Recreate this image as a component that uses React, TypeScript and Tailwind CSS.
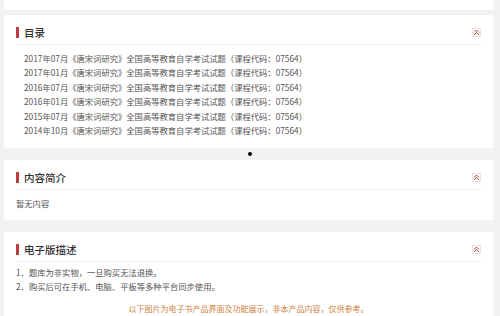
import React from "react";

const catalog = [
  "2017年07月《唐宋词研究》全国高等教育自学考试试题（课程代码：07564）",
  "2017年01月《唐宋词研究》全国高等教育自学考试试题（课程代码：07564）",
  "2016年07月《唐宋词研究》全国高等教育自学考试试题（课程代码：07564）",
  "2016年01月《唐宋词研究》全国高等教育自学考试试题（课程代码：07564）",
  "2015年07月《唐宋词研究》全国高等教育自学考试试题（课程代码：07564）",
  "2014年10月《唐宋词研究》全国高等教育自学考试试题（课程代码：07564）",
];

function CollapseIcon() {
  return (
    <span className="flex h-[9px] w-[9px] items-center justify-center border border-[#f1dede] bg-white">
      <svg width="7" height="7" viewBox="0 0 7 7" fill="none" stroke="#a0474a" strokeWidth="1">
        <path d="M1 3.5 L3.5 1 L6 3.5" />
        <path d="M1 6 L3.5 3.5 L6 6" />
      </svg>
    </span>
  );
}

function SectionHeader({ title }: { title: string }) {
  return (
    <div className="mx-[12px] flex items-center justify-between border-b border-[#eeeeee] pt-[11px] pb-[5px]">
      <div className="flex h-[13px] items-center">
        <span className="mr-[5px] h-[11px] w-[3px] bg-[#bd3f41]" />
        <span className="text-[10.5px] font-medium leading-[13px] text-[#333333]">{title}</span>
      </div>
      <CollapseIcon />
    </div>
  );
}

export default function App() {
  return (
    <div
      className="h-[316px] w-[500px] overflow-hidden bg-[#f2f2f2]"
      style={{ fontFamily: '"Noto Sans CJK SC", "Noto Sans", sans-serif' }}
    >
      {/* 上一块 */}
      <div className="ml-[4px] mr-[7px] h-[10px] bg-white" />

      {/* 目录 */}
      <div className="ml-[4px] mr-[7px] mt-[5px] bg-white pb-[11px]">
        <SectionHeader title="目录" />
        <ul className="mt-[6px] pl-[20px] text-[8.3px] leading-[14.4px] text-[#555555]">
          {catalog.map((t, i) => (
            <li key={i}>{t}</li>
          ))}
        </ul>
      </div>

      <div className="flex h-[12px] items-center justify-center">
        <span className="h-[4px] w-[4px] rounded-full bg-black" />
      </div>

      {/* 内容简介 */}
      <div className="ml-[4px] mr-[7px] bg-white pb-[9px]">
        <SectionHeader title="内容简介" />
        <p className="mt-[6px] pl-[12px] text-[8.3px] leading-[14.4px] text-[#555555]">暂无内容</p>
      </div>

      {/* 电子版描述 */}
      <div className="ml-[4px] mr-[7px] mt-[12px] bg-white pb-[10px]">
        <SectionHeader title="电子版描述" />
        <div className="mt-[3px] pl-[12px] text-[8.3px] leading-[14px] text-[#555555]">
          <p>1．题库为非实物，一旦购买无法退换。</p>
          <p>2．购买后可在手机、电脑、平板等多种平台同步使用。</p>
        </div>
        <p className="mt-[9px] text-center text-[8px] leading-[14px] text-[#d0823c]">
          以下图片为电子书产品界面及功能展示，非本产品内容，仅供参考。
        </p>
      </div>
    </div>
  );
}
